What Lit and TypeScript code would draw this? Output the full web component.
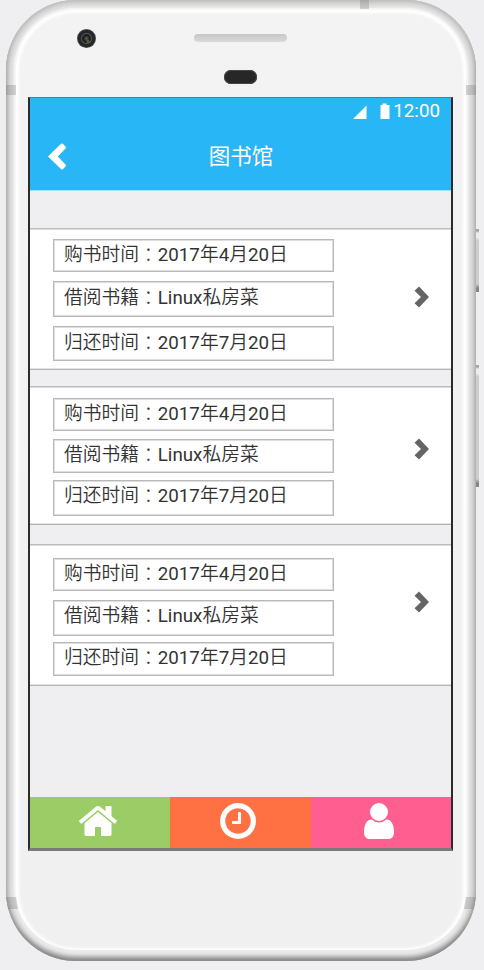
import { LitElement, html, css, svg } from "lit";
import { customElement, property } from "lit/decorators.js";

type Loan = { kind: string; bought: string; book: string; due: string };

const loans: Loan[] = [
  { kind: "first", bought: "2017年4月20日", book: "Linux私房菜", due: "2017年7月20日" },
  { kind: "second", bought: "2017年4月20日", book: "Linux私房菜", due: "2017年7月20日" },
  { kind: "third", bought: "2017年4月20日", book: "Linux私房菜", due: "2017年7月20日" },
];

const glyphs: Record<string, string> = {
  home: "M1472 992v480q0 26-19 45t-45 19h-384v-384h-256v384h-384q-26 0-45-19t-19-45v-480q0-1 .5-3t.5-3l575-474 575 474q1 2 1 6zm223-69l-62 74q-8 9-21 11h-3q-13 0-21-7l-692-577-692 577q-12 8-24 7-13-2-21-11l-62-74q-8-10-7-23.5t11-21.5l719-599q32-26 76-26t76 26l244 204v-195q0-14 9-23t23-9h192q14 0 23 9t9 23v408l219 182q10 8 11 21.5t-7 23.5z",
  clock: "M1024 544v448q0 14-9 23t-23 9h-320q-14 0-23-9t-9-23v-64q0-14 9-23t23-9h224v-352q0-14 9-23t23-9h64q14 0 23 9t9 23zm416 352q0-148-73-273t-198-198-273-73-273 73-198 198-73 273 73 273 198 198 273 73 273-73 198-198 73-273zm224 0q0 209-103 385.5t-279.5 279.5-385.5 103-385.5-103-279.5-279.5-103-385.5 103-385.5 279.5-279.5 385.5-103 385.5 103 279.5 279.5 103 385.5z",
  user: "M1536 1399q0 109-62.5 187t-150.5 78h-854q-88 0-150.5-78t-62.5-187q0-85 8.5-160.5t31.5-152 58.5-131 94-89 134.5-34.5q131 128 313 128t313-128q76 0 134.5 34.5t94 89 58.5 131 31.5 152 8.5 160.5zm-256-887q0 159-112.5 271.5t-271.5 112.5-271.5-112.5-112.5-271.5 112.5-271.5 271.5-112.5 271.5 112.5 112.5 271.5z",
};

@customElement("loan-card")
class LoanCard extends LitElement {
  @property({ attribute: false }) loan!: Loan;

  static styles = css`
    :host { display: block; }
    .card {
      box-sizing: border-box;
      height: 100%;
      display: grid;
      grid-template-columns: 281px 1fr;
      border-top: 1px solid #bcbcbe;
      border-bottom: 1px solid #b4b4b6;
      box-shadow: inset 0 1px #dcdcde, inset 0 -1px #e4e4e6;
      background: #fff;
      padding-left: 23px;
    }
    .fields { display: grid; align-content: start; }
    .first .fields { padding-top: 10px; grid-template-rows: 33px 36px 35px; row-gap: 9px; }
    .second .fields { padding-top: 11px; grid-template-rows: 34px 34px 36px; row-gap: 7px; }
    .third .fields { padding-top: 13px; grid-template-rows: 36px 36px 34px; row-gap: 6px; }
    .second .field:first-child { margin-bottom: 1px; }
    .third .field:first-child { margin-bottom: 3px; }
    .field {
      box-sizing: border-box;
      border: 1px solid #b8b8b8;
      box-shadow: inset 0 0 0 1px #dedede;
      padding: 1px 0 0 10px;
      font: 350 18.75px/29px Roboto, "Noto Sans CJK SC", sans-serif;
      color: #333;
      white-space: nowrap;
    }
    .first .field:nth-child(2) { line-height: 30px; }
    .first .field:nth-child(3) { line-height: 30px; }
    .colon { position: relative; top: 1px; font-family: "Noto Sans CJK TC", sans-serif; font-weight: 300; line-height: 1; }
    .latin { font-weight: 400; }
    .more { width: 16px; height: 22px; align-self: start; margin-left: 80px; fill: #656565; }
    .first .more { margin-top: 57px; }
    .second .more { margin-top: 51px; }
    .third .more { margin-top: 46px; }
  `;

  private runs(text: string) {
    return text
      .split(/([A-Za-z0-9]+)/)
      .filter(Boolean)
      .map((part) => (/^[A-Za-z0-9]/.test(part) ? html`<span class="latin">${part}</span>` : part));
  }

  render() {
    const l = this.loan;
    const rows = [["购书时间", l.bought], ["借阅书籍", l.book], ["归还时间", l.due]];
    return html`<div class="card ${l.kind}">
      <div class="fields">
        ${rows.map(([k, v]) => html`<div class="field">${k}<span class="colon" lang="zh-TW">：</span>${this.runs(v)}</div>`)}
      </div>
      <svg class="more" viewBox="0 0 16 22"><path d="M5 .5L15 11 5 21.5.5 17.2 7 11 .5 4.8z" /></svg>
    </div>`;
  }
}

@customElement("app-root")
class AppRoot extends LitElement {
  static styles = css`
    :host { display: block; }
    .page {
      position: relative;
      box-sizing: border-box;
      width: 484px;
      height: 970px;
      padding-left: 6px;
      overflow: hidden;
      background: #efeff1;
    }
    .phone {
      position: relative;
      box-sizing: border-box;
      width: 470px;
      height: 961px;
      padding: 97px 0 0 22px;
      border-radius: 70px;
      background: linear-gradient(#f3f3f3, #f0f0f0);
      box-shadow:
        inset 0 -5px 4px -1px rgba(60, 60, 60, 0.42),
        inset 0 0 0 1px #c2c2c0,
        inset 0 0 0 2px #c6c6c4,
        inset 0 0 0 3px #cdcdcb,
        inset 0 0 0 4px #d4d4d2,
        inset 0 0 0 5px #d9d9d9,
        inset 0 0 0 6px #dedede,
        inset 0 0 0 7px #e3e3e3,
        inset 0 0 0 8px #e8e8e8,
        inset 0 -3px 1px 8px #e9e9e9,
        inset 0 0 0 10px #f6f6f6,
        inset 0 0 3px 13px #fff;
    }
    .camera, .speaker, .sensor, .seam, .side { position: absolute; }
    .camera {
      left: 71px; top: 29px; width: 19px; height: 19px; border-radius: 50%;
      background: radial-gradient(circle at 58% 66%, #5c6025 0 1px, transparent 2px),
        radial-gradient(circle, #4a5258 0 1px, #1b1d1e 3px 4px, #50565a 5px, #242628 6px 8px, #45484a 9px);
    }
    .speaker { left: 188px; top: 34px; width: 93px; height: 8px; border-radius: 4px; background: linear-gradient(#c6c6c6, #dadada); }
    .sensor { left: 218px; top: 70px; width: 33px; height: 14px; border-radius: 7px; background: #272727; box-shadow: inset 0 0 0 1px #444; }
    .seam { width: 10px; height: 10px; background: rgba(120, 120, 120, 0.3); }
    .seam.tl { left: 0; top: 85px; }
    .seam.tr { right: 0; top: 85px; }
    .seam.t { right: 107px; top: 0; width: 9px; height: 9px; }
    .seam.bl { left: 1px; bottom: 52px; height: 12px; transform: skewX(10deg); }
    .seam.br { right: 1px; bottom: 52px; height: 12px; transform: skewX(-10deg); }
    .side { left: 475px; width: 4px; background: linear-gradient(#a5a5a5 0 2px, #eee 4px 8px, #cdcdcd 12px calc(100% - 8px), #858585 calc(100% - 4px)); }
    .power { top: 229px; height: 63px; }
    .volume { top: 365px; height: 122px; }
    .screen {
      box-sizing: border-box;
      width: 425px;
      height: 754px;
      display: flex;
      flex-direction: column;
      border: solid #292b2d;
      border-width: 1px 2px 3px;
      border-top-color: #627985;
      border-bottom-color: #7b7b7d;
      background: #efeff1;
    }
    .header { height: 92px; flex: none; background: #29b6f7; color: #fff; border-bottom: 1px solid #a8def7; }
    .status {
      display: flex; justify-content: flex-end; align-items: flex-start;
      height: 29px; padding-right: 11px;
      font: 450 18.8px/26px Roboto, sans-serif;
    }
    .status svg { width: 40px; height: 22px; fill: #fff; }
    .bar { display: grid; grid-template-columns: 60px 1fr 59px; height: 57px; align-items: center; }
    .back { width: 19px; height: 27px; margin-left: 18px; margin-top: 1px; fill: #fff; }
    .title { margin-top: -2px; text-align: center; font: 400 21.5px/30px "Noto Sans CJK SC", sans-serif; }
    .list { flex: 1; display: grid; grid-template-rows: 142px 139px 145px; row-gap: 16px; align-content: start; padding-top: 37px; }
    .list loan-card:last-of-type { margin-top: 3px; }
    .tabs { display: grid; grid-template-columns: 140px 141px 140px; height: 51px; flex: none; }
    .tab { box-sizing: border-box; display: flex; justify-content: center; align-items: center; padding: 0 4px 3px 0; }
    .tab svg { width: 42px; height: 42px; fill: #fff; }
    .home { background: #9ccc65; }
    .clock { background: #ff7143; padding-right: 6px; }
    .user { background: #ff5e91; }
  `;

  render() {
    return html`<main class="page">
      <div class="side power"></div>
      <div class="side volume"></div>
      <div class="phone">
        <i class="camera"></i><i class="speaker"></i><i class="sensor"></i>
        <i class="seam t"></i><i class="seam tl"></i><i class="seam tr"></i><i class="seam bl"></i><i class="seam br"></i>
        <section class="screen">
          <header class="header">
            <div class="status">
              <svg viewBox="0 0 40 22"><path d="M0 21L13.5 7.5V21z M27.5 7h2V5.5h4V7h3v14h-9z" /></svg>
              <span>12:00</span>
            </div>
            <div class="bar">
              <svg class="back" viewBox="0 0 19 27"><path d="M0 13.5L13 .8q1-.8 2 .2l2.5 2.6q1 1 0 2L9.8 13.5l7.7 7.9q1 1 0 2L15 26q-1 1-2 0z" /></svg>
              <div class="title">图书馆</div>
            </div>
          </header>
          <div class="list">${loans.map((l) => html`<loan-card .loan=${l}></loan-card>`)}</div>
          <nav class="tabs">
            ${Object.entries(glyphs).map(([name, d]) => html`<div class="tab ${name}"><svg viewBox="0 0 1792 1792">${svg`<path d=${d} />`}</svg></div>`)}
          </nav>
        </section>
      </div>
    </main>`;
  }
}
